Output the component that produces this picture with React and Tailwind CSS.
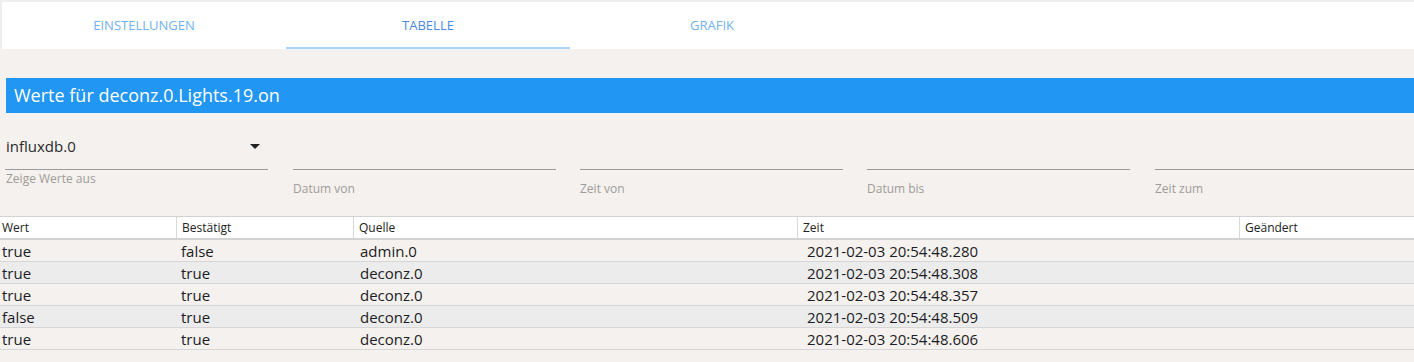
const tabs = [
  { label: "Einstellungen", active: false },
  { label: "Tabelle", active: true },
  { label: "Grafik", active: false },
];

// gaps between the filter fields are not all equal in the original
const fields = [
  { label: "Datum von", cls: "ml-[25px] w-[263px]" },
  { label: "Zeit von", cls: "ml-[24px] w-[263px]" },
  { label: "Datum bis", cls: "ml-[24px] w-[263px]" },
  { label: "Zeit zum", cls: "ml-[25px] flex-1" },
];

const rows = [
  { val: "true", ack: "false", from: "admin.0", ts: "2021-02-03 20:54:48.280" },
  { val: "true", ack: "true", from: "deconz.0", ts: "2021-02-03 20:54:48.308" },
  { val: "true", ack: "true", from: "deconz.0", ts: "2021-02-03 20:54:48.357" },
  { val: "false", ack: "true", from: "deconz.0", ts: "2021-02-03 20:54:48.509" },
  { val: "true", ack: "true", from: "deconz.0", ts: "2021-02-03 20:54:48.606" },
];

const cols = "grid grid-cols-[176px_177px_444px_442px_1fr]";

export default function App() {
  return (
    <div className="h-[362px] overflow-hidden bg-[#f4f1ee] font-['Open_Sans',sans-serif] text-[#1c1c24]">
      {/* Tabs */}
      <div className="bg-[#eeeeee] pl-[2px] pt-[2px]">
        <div className="flex h-[47px] bg-white">
          {tabs.map((t) => (
            <div
              key={t.label}
              className={
                "flex w-[284px] items-center justify-center pt-[2px] text-[13px] uppercase " +
                (t.active
                  ? "border-b-2 border-[#a8d5fa] text-[#4a8ae6]"
                  : "border-b-2 border-transparent text-[#72b2f2]")
              }
            >
              {t.label}
            </div>
          ))}
        </div>
      </div>

      {/* Title bar */}
      <div className="ml-[6px] mt-[29px] flex h-[35px] items-center bg-[#2196f3] pl-[8px] text-[18px] text-white">
        Werte für deconz.0.Lights.19.on
      </div>

      {/* Filters */}
      <div className="flex h-[103px] pl-[5px]">
        <div className="w-[263px]">
          <div className="flex h-[57px] items-end justify-between border-b border-[#9b9b9b] pb-[12px] pl-[1px] pr-[8px]">
            <span className="text-[15px] text-[#2a2a2a]">influxdb.0</span>
            <svg width="10" height="5" viewBox="0 0 10 5" className="mb-[8px]">
              <polygon points="0,0 10,0 5,5" fill="#222" />
            </svg>
          </div>
          <div className="pl-[1px] text-[12px] text-[#a09c99]">Zeige Werte aus</div>
        </div>
        {fields.map((f) => (
          <div key={f.label} className={f.cls}>
            <div className="h-[57px] border-b border-[#9b9b9b]" />
            <div className="mt-[10px] text-[12px] text-[#a09c99]">{f.label}</div>
          </div>
        ))}
      </div>

      {/* Table */}
      <div className={cols + " h-[24px] border-t border-b-2 border-[#d2d2d2] bg-white text-[12px] text-[#222]"}>
        <div className="flex items-center pl-[2px]">Wert</div>
        <div className="flex items-center border-l border-[#d9d9d9] pl-[5px]">Bestätigt</div>
        <div className="flex items-center border-l border-[#d9d9d9] pl-[5px]">Quelle</div>
        <div className="flex items-center border-l border-[#d9d9d9] pl-[5px]">Zeit</div>
        <div className="flex items-center border-l border-[#d9d9d9] pl-[5px]">Geändert</div>
      </div>
      {rows.map((r, i) => (
        <div
          key={i}
          className={
            cols +
            " h-[22px] border-b border-[#d6d6d6] pt-[1px] text-[15px] leading-[21px] " +
            (i % 2 === 1 ? "bg-[#ececec]" : "")
          }
        >
          <div className="pl-[2px]">{r.val}</div>
          <div className="pl-[5px]">{r.ack}</div>
          <div className="pl-[7px]">{r.from}</div>
          <div className="pl-[10px]">{r.ts}</div>
          <div />
        </div>
      ))}
    </div>
  );
}
